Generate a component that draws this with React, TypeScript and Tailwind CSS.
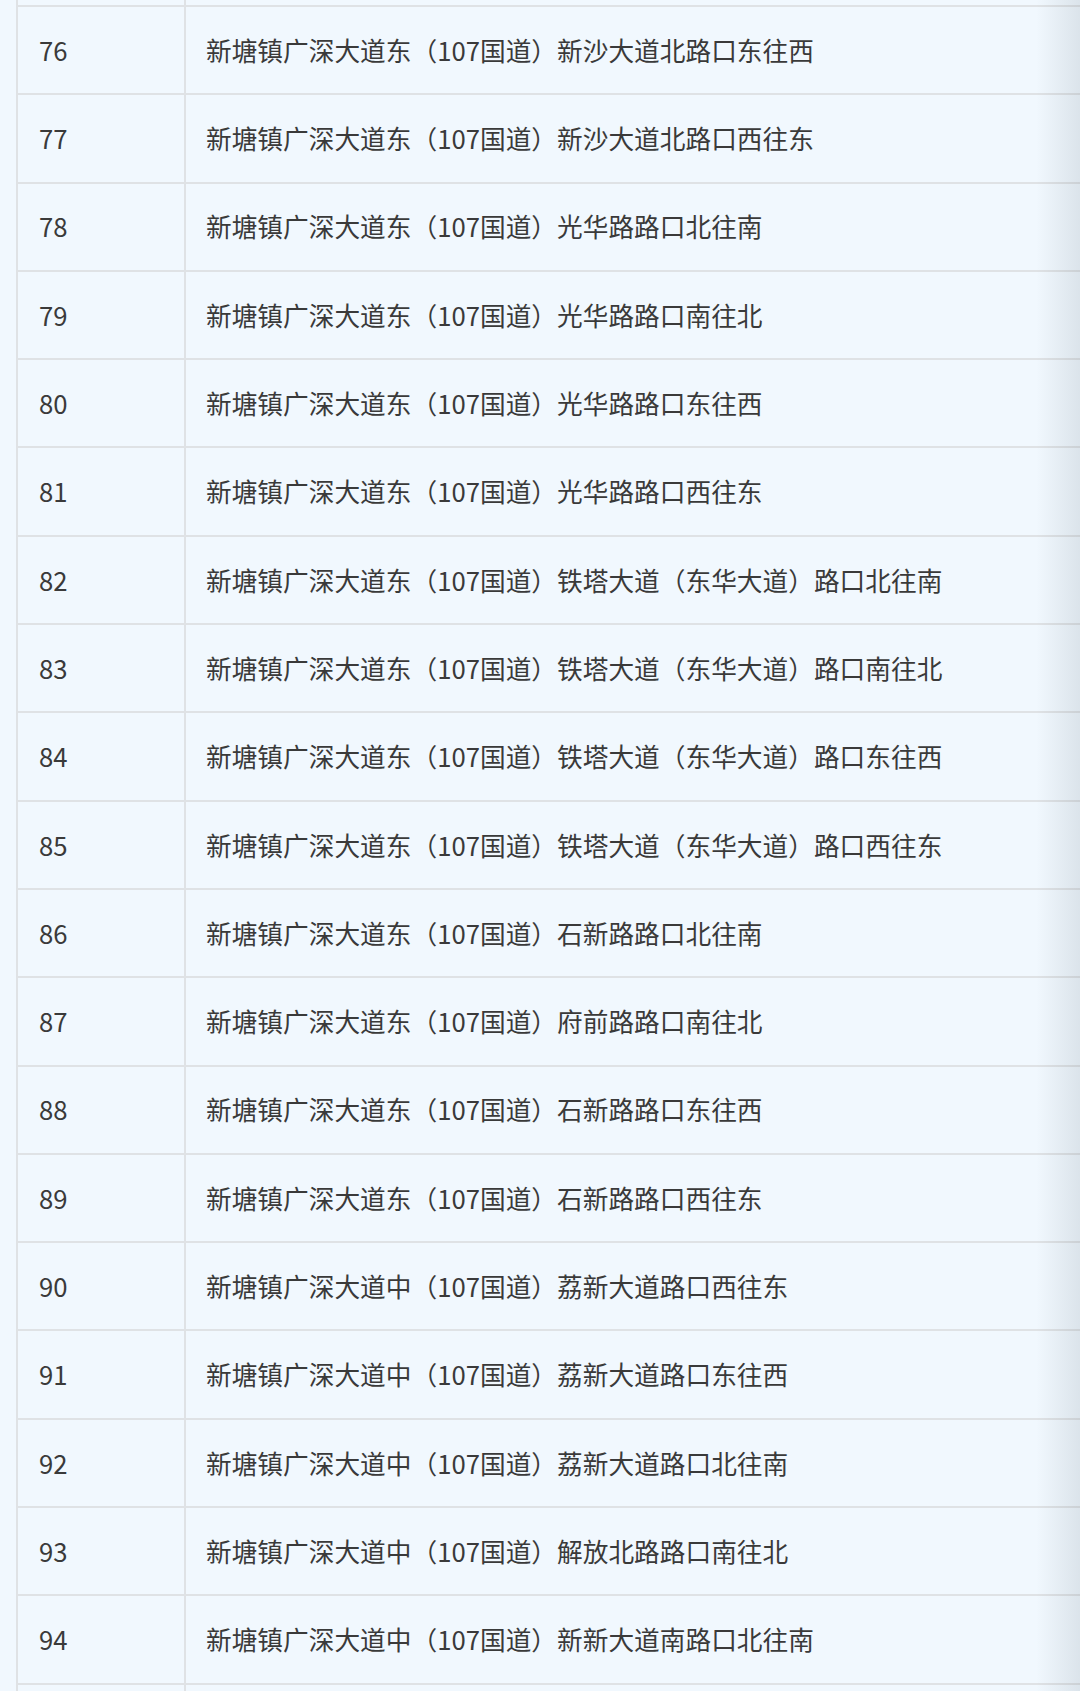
const rows: [number, string][] = [
  [76, '新塘镇广深大道东（107国道）新沙大道北路口东往西'],
  [77, '新塘镇广深大道东（107国道）新沙大道北路口西往东'],
  [78, '新塘镇广深大道东（107国道）光华路路口北往南'],
  [79, '新塘镇广深大道东（107国道）光华路路口南往北'],
  [80, '新塘镇广深大道东（107国道）光华路路口东往西'],
  [81, '新塘镇广深大道东（107国道）光华路路口西往东'],
  [82, '新塘镇广深大道东（107国道）铁塔大道（东华大道）路口北往南'],
  [83, '新塘镇广深大道东（107国道）铁塔大道（东华大道）路口南往北'],
  [84, '新塘镇广深大道东（107国道）铁塔大道（东华大道）路口东往西'],
  [85, '新塘镇广深大道东（107国道）铁塔大道（东华大道）路口西往东'],
  [86, '新塘镇广深大道东（107国道）石新路路口北往南'],
  [87, '新塘镇广深大道东（107国道）府前路路口南往北'],
  [88, '新塘镇广深大道东（107国道）石新路路口东往西'],
  [89, '新塘镇广深大道东（107国道）石新路路口西往东'],
  [90, '新塘镇广深大道中（107国道）荔新大道路口西往东'],
  [91, '新塘镇广深大道中（107国道）荔新大道路口东往西'],
  [92, '新塘镇广深大道中（107国道）荔新大道路口北往南'],
  [93, '新塘镇广深大道中（107国道）解放北路路口南往北'],
  [94, '新塘镇广深大道中（107国道）新新大道南路口北往南'],
];

function Row({ no, name }: { no?: number; name?: string }) {
  return (
    <div className="flex h-[88.3px] border-b-2 border-[#dfe2e5]">
      <div className="w-[168px] shrink-0 border-r-2 border-[#dfe2e5] flex items-center pl-[21px]">
        {no}
      </div>
      <div className="flex-1 flex items-center pl-5 whitespace-nowrap">{name}</div>
    </div>
  );
}

export default function App() {
  return (
    <div
      className="relative h-[1691px] w-[1080px] overflow-hidden bg-[#f1f8fe] text-[25.7px] text-[#3a3a3a]"
      style={{ fontFamily: '"Noto Sans CJK SC", "Noto Sans", sans-serif' }}
    >
      <div className="ml-4 border-l-2 border-[#dfe2e5]">
        <div className="flex h-[7px] border-b-2 border-[#dfe2e5]">
          <div className="w-[168px] shrink-0 border-r-2 border-[#dfe2e5]" />
        </div>
        {rows.map(([no, name]) => (
          <Row key={no} no={no} name={name} />
        ))}
        <div className="flex h-[20px]">
          <div className="w-[168px] shrink-0 border-r-2 border-[#dfe2e5]" />
        </div>
      </div>
      {/* fixed-column shadow on the right edge */}
      <div className="pointer-events-none absolute inset-y-0 right-0 w-[44px] bg-linear-to-r from-transparent to-[rgba(60,80,95,0.12)]" />
    </div>
  );
}
